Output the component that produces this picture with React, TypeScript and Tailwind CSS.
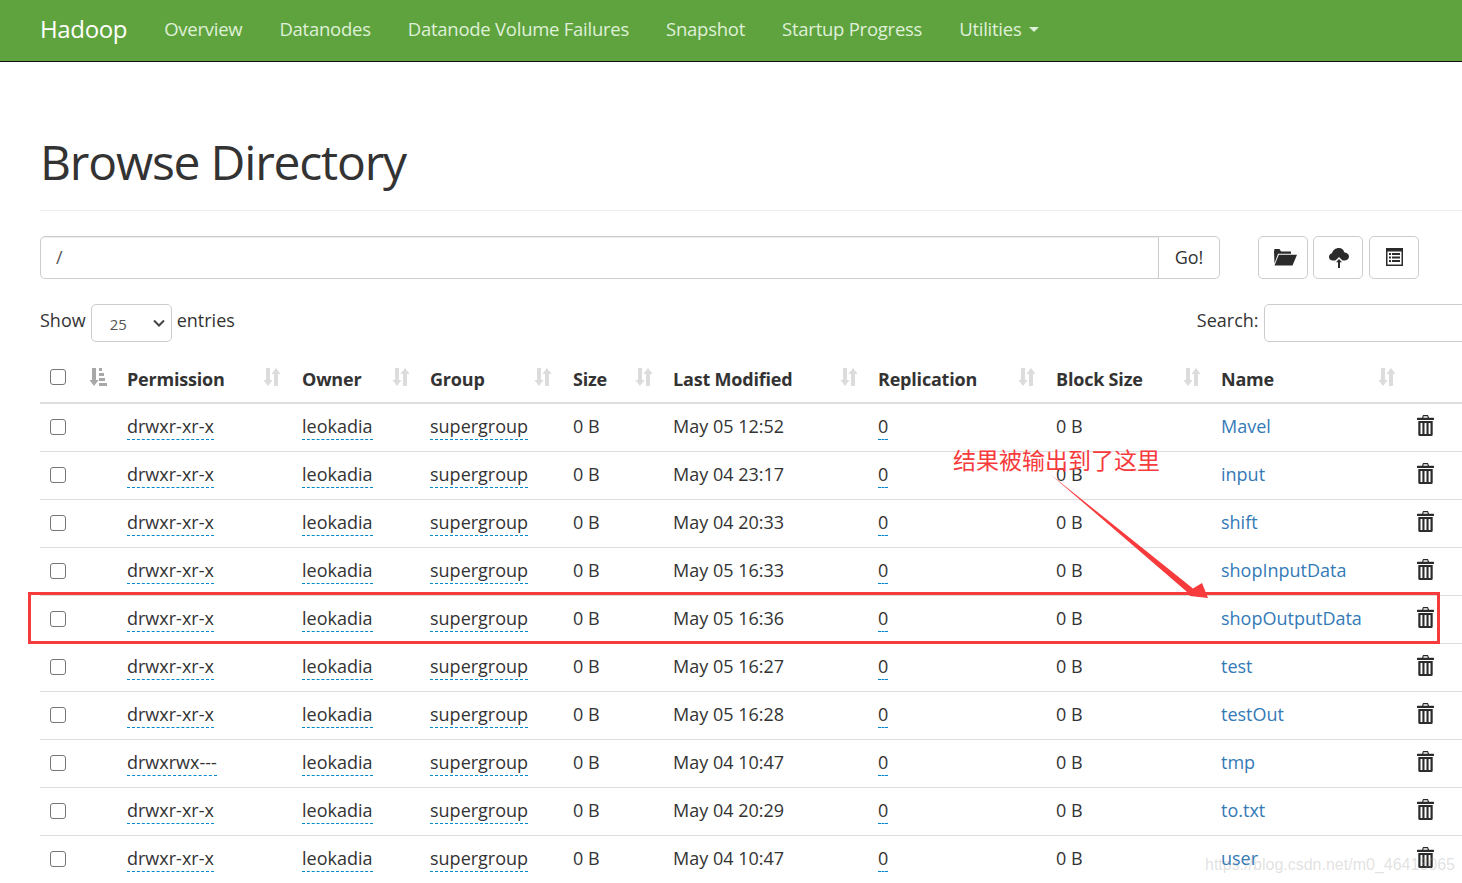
import React from "react";

const rows = [
  ["drwxr-xr-x", "May 05 12:52", "Mavel"],
  ["drwxr-xr-x", "May 04 23:17", "input"],
  ["drwxr-xr-x", "May 04 20:33", "shift"],
  ["drwxr-xr-x", "May 05 16:33", "shopInputData"],
  ["drwxr-xr-x", "May 05 16:36", "shopOutputData"],
  ["drwxr-xr-x", "May 05 16:27", "test"],
  ["drwxr-xr-x", "May 05 16:28", "testOut"],
  ["drwxrwx---", "May 04 10:47", "tmp"],
  ["drwxr-xr-x", "May 04 20:29", "to.txt"],
  ["drwxr-xr-x", "May 04 10:47", "user"],
];

const SortIcon = ({ active = false }: { active?: boolean }) => (
  <svg width="18" height="20" viewBox="0 0 18 20" className={active ? "text-[#a8a8a8]" : "text-[#dcdcdc]"} fill="currentColor">
    <path d="M3 1h4v12h2.600L5 19 .4 13H3z" />
    {active ? (
      <path d="M10 1h3v3h-3zM10 6h5v3h-5zM10 11h6v3h-6zM10 16h8v3h-8z" />
    ) : (
      <path d="M11 19V7H8.400L13 1l4.600 6H15v12z" />
    )}
  </svg>
);

const Trash = () => (
  <svg width="17" height="21" viewBox="0 0 17 21" fill="#2b2b2b">
    <path d="M6 0h5l1 2.800h4.500a.5.5 0 0 1 .5.500V5H0V3.300a.5.5 0 0 1 .5-.5H5zM6.700 1.300l-.4 1.500h4.400l-.4-1.500z" fillRule="evenodd" />
    <path d="M1.300 6h14.400v13.500a1.500 1.500 0 0 1-1.500 1.500H2.800a1.500 1.500 0 0 1-1.500-1.500zM3.500 8v11h1.900V8zM7.500 8v11h2V8zM11.600 8v11h1.900V8z" fillRule="evenodd" />
  </svg>
);

const Dashed = ({ children }: { children: React.ReactNode }) => (
  <span className="border-b border-dashed border-[#0088cc] pb-[1px]">{children}</span>
);

const Box = () => (
  <span className="block w-[16px] h-[16px] rounded-[3px] border border-[#767676] bg-white" />
);

const Th = ({ children, iconAt }: { children: React.ReactNode; iconAt: string }) => (
  <th className="relative p-0 pt-[2px] text-left font-bold align-middle tracking-[-0.2px]">
    {children}
    <span className={`absolute top-[12px] ${iconAt}`}>
      <SortIcon />
    </span>
  </th>
);

export default function App() {
  return (
    <div
      className="relative w-[1462px] h-[883px] overflow-hidden bg-white text-[#333] text-[18px]"
      style={{ fontFamily: '"Open Sans", "Noto Sans CJK SC", sans-serif' }}
    >
      <nav className="h-[62px] bg-[#5fa33e] border-b border-[#111] flex items-center pl-[40px] pb-[4px]">
        <span className="text-[24px] text-white mr-[37px] tracking-[-0.35px]">Hadoop</span>
        <div className="flex items-center gap-[37px] text-[#dff0d8] text-[18.500px] tracking-[-0.25px]">
          <span>Overview</span>
          <span>Datanodes</span>
          <span>Datanode Volume Failures</span>
          <span>Snapshot</span>
          <span>Startup Progress</span>
          <span className="flex items-center gap-[8px]">
            Utilities
            <span className="w-0 h-0 border-x-[5px] border-x-transparent border-t-[5px] border-t-[#dff0d8] mt-[2px]" />
          </span>
        </div>
      </nav>

      <div className="pl-[40px]">
        <div className="mt-[67px] h-[82px] border-b border-[#eeeeee]">
          <h1 className="text-[48px] leading-[66px] font-normal tracking-[-1.2px]">Browse Directory</h1>
        </div>

        <div className="mt-[25px] flex h-[43px] items-stretch">
          <div className="w-[1119px] border border-[#ccc] rounded-l-[5px] flex items-center pl-[15px] text-[#555] shadow-[inset_0_1px_1px_rgba(0,0,0,0.075)]">/</div>
          <div className="w-[62px] -ml-px border border-[#ccc] rounded-r-[5px] flex items-center justify-center">Go!</div>
          <div className="ml-[38px] w-[50px] border border-[#ccc] rounded-[5px] flex items-center justify-center">
            <svg className="ml-[3px] -mt-[2px]" width="24" height="18" viewBox="0 0 24 18" fill="#2b2b2b">
              <path d="M1 3.500 1.500 1h5l1.500 2.500h10v2.300H5L1.500 15.500zM5.800 6.800H24L19.500 17.500H1.500z" />
            </svg>
          </div>
          <div className="ml-[5px] w-[50px] border border-[#ccc] rounded-[5px] flex items-center justify-center">
            <svg className="ml-[2px]" width="20" height="20" viewBox="0 0 20 20" fill="#2b2b2b">
              <path d="M10 0c2.800 0 4.800 1.800 5.200 4.200C17.800 4.400 20 6.200 20 8.600c0 2.200-1.800 3.900-3.900 3.900H3.600C1.600 12.500 0 10.900 0 8.900c0-1.900 1.400-3.300 3-3.600C3.700 2.200 6.500 0 10 0z" />
              <path d="M10 9 15.200 14.300H11.700V20H8.300V14.300H4.800z" fill="#fff" />
              <path d="M10 11 13 14.300H11V20H9V14.300H7z" />
            </svg>
          </div>
          <div className="ml-[6px] w-[50px] border border-[#ccc] rounded-[5px] flex items-center justify-center">
            <svg className="-mt-[2px]" width="17" height="18" viewBox="0 0 17 18" fill="#2b2b2b">
              <path fillRule="evenodd" d="M0 0h17v18H0zM1.500 3.500v13h14v-13zM3 5h2v2H3zM6 5h8v2H6zM3 8.500h2v2H3zM6 8.500h8v2H6zM3 12h2v2H3zM6 12h8v2H6z" />
            </svg>
          </div>
        </div>

        <div className="mt-[25px] flex h-[38px] items-center">
          <span className="-mt-[5px]">Show</span>
          <div className="ml-[5px] w-[81px] h-[38px] shrink-0 border border-[#ccc] rounded-[5px] flex items-center pl-[18px] pr-[6px] justify-between text-[#555] text-[15px]">
            <span className="mt-[2px]">25</span>
            <svg width="12" height="8" viewBox="0 0 12 8" fill="none" stroke="#444" strokeWidth="2"><path d="M1 1.500l5 5 5-5" /></svg>
          </div>
          <span className="ml-[5px] -mt-[5px]">entries</span>
          <span className="ml-[962px] mr-[5px] -mt-[5px]">Search:</span>
          <div className="w-[260px] h-[38px] shrink-0 border border-[#ccc] rounded-[5px]" />
        </div>

        <table className="mt-[13px] table-fixed border-collapse w-[1440px]">
          <colgroup>
            <col className="w-[87px]" />
            <col className="w-[175px]" />
            <col className="w-[128px]" />
            <col className="w-[143px]" />
            <col className="w-[100px]" />
            <col className="w-[205px]" />
            <col className="w-[178px]" />
            <col className="w-[165px]" />
            <col className="w-[259px]" />
          </colgroup>
          <thead>
            <tr className="h-[48px] border-b-[2px] border-[#dddddd]">
              <th className="relative p-0">
                <span className="absolute left-[10px] top-[14px]"><Box /></span>
                <span className="absolute left-[49px] top-[12px]"><SortIcon active /></span>
              </th>
              <Th iconAt="left-[136px]">Permission</Th>
              <Th iconAt="left-[90px]">Owner</Th>
              <Th iconAt="left-[104px]">Group</Th>
              <Th iconAt="left-[62px]">Size</Th>
              <Th iconAt="left-[167px]">Last Modified</Th>
              <Th iconAt="left-[140px]">Replication</Th>
              <Th iconAt="left-[127px]">Block Size</Th>
              <Th iconAt="left-[157px]">Name</Th>
            </tr>
          </thead>
          <tbody>
            {rows.map((r) => (
              <tr key={r[2]} className="h-[48px] border-b border-[#dddddd]">
                <td className="p-0 pl-[10px]"><Box /></td>
                <td className="p-0 pb-[2px]"><Dashed>{r[0]}</Dashed></td>
                <td className="p-0 pb-[2px]"><Dashed>leokadia</Dashed></td>
                <td className="p-0 pb-[2px]"><Dashed>supergroup</Dashed></td>
                <td className="p-0 pb-[2px]">0 B</td>
                <td className="p-0 pb-[2px]">{r[1]}</td>
                <td className="p-0 pb-[2px]"><Dashed>0</Dashed></td>
                <td className="p-0 pb-[2px]">0 B</td>
                <td className="p-0 pb-[2px] relative text-[#337ab7]">
                  {r[2]}
                  <span className="absolute left-[196px] top-[11px]"><Trash /></span>
                </td>
              </tr>
            ))}
          </tbody>
        </table>
      </div>

      <div className="absolute left-[28px] top-[592px] w-[1412px] h-[52px] border-[3px] border-[#f73a3c]" />
      <span className="absolute left-[953px] top-[443px] text-[23px] leading-[34px] text-[#f73a3c] whitespace-nowrap">结果被输出到了这里</span>
      <svg className="absolute left-[1040px] top-[465px]" width="180" height="145" viewBox="1040 465 180 145" fill="#f73a3c">
        <path d="M1050 474 1193 588.500 1202 583 1208 598 1190 596 1186 591z" />
      </svg>
      <span
        className="absolute left-[1205px] top-[853px] text-[16px] leading-[24px] text-[#9a9a9a]/30 whitespace-nowrap"
        style={{ fontFamily: '"Liberation Sans", sans-serif' }}
      >
        https://blog.csdn.net/m0_46413065
      </span>
    </div>
  );
}
